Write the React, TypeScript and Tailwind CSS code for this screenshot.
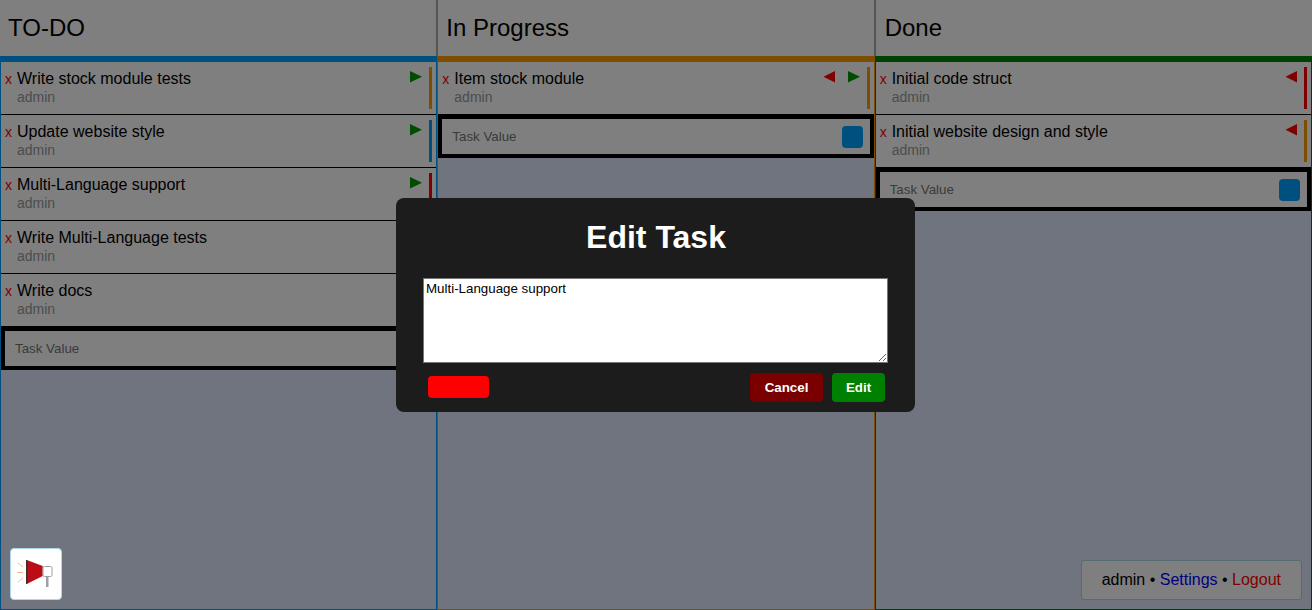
const PRIORITY = {
  high: 'bg-[#ff0000]',
  medium: 'bg-[#ff9a00]',
  low: 'bg-[#00a0ff]',
};

type Priority = keyof typeof PRIORITY;

type Task = {
  title: string;
  priority: Priority;
  back?: boolean;
  forward?: boolean;
};

const columns: {
  name: string;
  header: string;
  body: string;
  tasks: Task[];
}[] = [
  {
    name: 'TO-DO',
    header: 'pl-[8px] border-r',
    body: 'border-[#00a0ff]',
    tasks: [
      { title: 'Write stock module tests', priority: 'medium', forward: true },
      { title: 'Update website style', priority: 'low', forward: true },
      { title: 'Multi-Language support', priority: 'high', forward: true },
      { title: 'Write Multi-Language tests', priority: 'low', forward: true },
      { title: 'Write docs', priority: 'low', forward: true },
    ],
  },
  {
    name: 'In Progress',
    header: 'pl-[8px] border-x',
    body: 'border-[#ff9a00]',
    tasks: [{ title: 'Item stock module', priority: 'medium', back: true, forward: true }],
  },
  {
    name: 'Done',
    header: 'pl-[9px] border-l',
    body: 'border-[#008000]',
    tasks: [
      { title: 'Initial code struct', priority: 'high', back: true },
      { title: 'Initial website design and style', priority: 'medium', back: true },
    ],
  },
];

function Arrow({ dir }: { dir: 'back' | 'forward' }) {
  return dir === 'forward' ? (
    <svg width="12" height="12" viewBox="0 0 12 12" className="shrink-0">
      <polygon points="0,0 12,5.75 0,11.5" fill="#009a00" />
    </svg>
  ) : (
    <svg width="12" height="12" viewBox="0 0 12 12" className="shrink-0">
      <polygon points="12,0 0.5,5.75 12,11.5" fill="#ff0000" />
    </svg>
  );
}

function TaskCard({ task }: { task: Task }) {
  return (
    <div className="flex h-[53px] border-b border-black bg-white pl-[4px] pr-[4px]">
      <span className="mt-[9px] w-[12px] text-[14px] leading-[16px] text-[#ff0000]">x</span>
      <div className="min-w-0 flex-1 pt-[7px]">
        <div className="text-[16px] leading-[19px] text-black">{task.title}</div>
        <div className="text-[14px] leading-[18px] text-[#999999]">admin</div>
      </div>
      <div className="mr-[7px] mt-[9px] flex h-[12px] gap-[13px]">
        {task.back && <Arrow dir="back" />}
        {task.forward && <Arrow dir="forward" />}
      </div>
      <div className={`my-[5px] w-[3px] ${PRIORITY[task.priority]}`} />
    </div>
  );
}

function AddTask() {
  return (
    <div className="flex h-[43px] items-center border-[4px] border-black bg-white pl-[10px] pr-[7px]">
      <span className="flex-1 text-[13.33px] text-[#757575]">Task Value</span>
      <button className="h-[22px] w-[21px] rounded-[4px] bg-[#00a0ff]" />
    </div>
  );
}

function Megaphone() {
  return (
    <svg width="52" height="52" viewBox="0 0 52 52">
      <g stroke="#ffb888" strokeWidth="1">
        <line x1="7" y1="24.5" x2="13" y2="24.5" />
        <line x1="8" y1="15" x2="13" y2="19" />
        <line x1="8" y1="34" x2="13" y2="30" />
      </g>
      <polygon points="16.7,12 32.7,18 32.7,28 16.7,36" fill="#bb0d18" />
      <line x1="16.7" y1="12" x2="16.7" y2="36" stroke="#200808" strokeWidth="1" />
      <rect x="36" y="29" width="2.5" height="10" fill="#a0a0a0" />
      <rect x="33" y="18.5" width="9" height="10" rx="1.5" fill="#ffffff" stroke="#a0a0a0" strokeWidth="1" />
    </svg>
  );
}

export default function App() {
  return (
    <div className="relative h-[610px] w-[1312px] overflow-hidden bg-[#e0e8ff] font-['Liberation_Sans',Arial,sans-serif]">
      <div className="grid h-full grid-cols-3">
        {columns.map((col) => (
          <section key={col.name} className="flex min-w-0 flex-col">
            <h2 className={`h-[56px] border-[#aaaaaa] bg-white text-[24px] font-normal leading-[56px] text-black ${col.header}`}>
              {col.name}
            </h2>
            <div className={`flex-1 border-x border-b border-t-[6px] ${col.body}`}>
              {col.tasks.map((task) => (
                <TaskCard key={task.title} task={task} />
              ))}
              <AddTask />
            </div>
          </section>
        ))}
      </div>

      <div className="absolute bottom-[10px] right-[10px] rounded-[3px] border border-[#add8e6] bg-white px-[20px] py-[9px] text-[16px] leading-[20px] text-black">
        admin • <a className="text-[#0000ff]">Settings</a> • <a className="text-[#ff0000]">Logout</a>
      </div>

      {/* Modal backdrop */}
      <div className="absolute inset-0 flex items-center justify-center bg-black/50">
        <div className="mr-[1px] flex h-[214px] w-[519px] flex-col rounded-[8px] bg-[#1c1c1c] px-[27px]">
          <h1 className="mt-[19px] pl-[1px] text-center text-[32px] font-bold leading-[40px] text-white">Edit Task</h1>
          <textarea
            readOnly
            value="Multi-Language support"
            className="mt-[21px] h-[85px] w-[465px] border border-[#767676] bg-white px-[2px] py-[2px] text-[13.33px] leading-[15px] text-black"
          />
          <div className="mt-[10px] flex items-center justify-between pl-[5px] pr-[3px]">
            <div className="mb-[1px] h-[22px] w-[60.5px] rounded-[4px] bg-[#ff0000]" />
            <div className="flex gap-[9px]">
              <button className="h-[29px] w-[73px] rounded-[4px] bg-[#7a0000] text-[13.33px] font-bold text-white">Cancel</button>
              <button className="h-[29px] w-[53px] rounded-[4px] bg-[#008000] text-[13.33px] font-bold text-white">Edit</button>
            </div>
          </div>
        </div>
      </div>

      {/* Notification button stays above the backdrop */}
      <div className="absolute bottom-[10px] left-[10px] h-[52px] w-[52px] rounded-[4px] border border-[#add8e6] bg-white">
        <div className="-m-px">
          <Megaphone />
        </div>
      </div>
    </div>
  );
}
